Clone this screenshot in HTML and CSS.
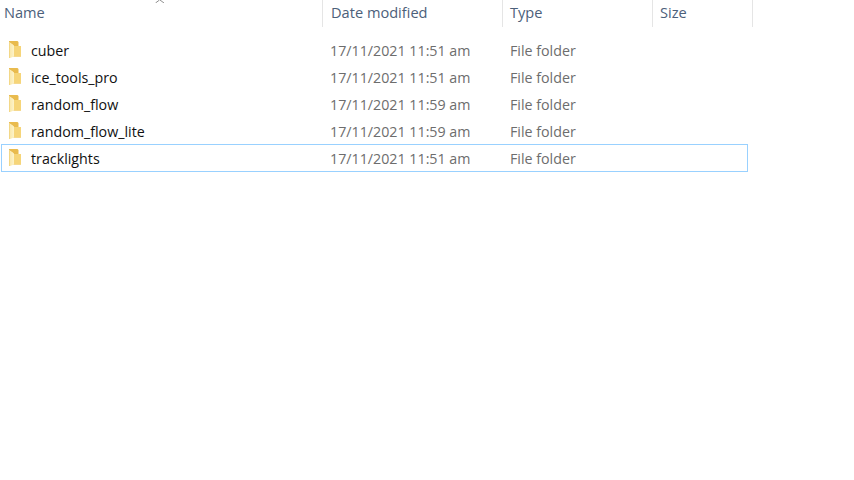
FILE: index.html
```html
<!DOCTYPE html>
<html lang="en">
<head>
<meta charset="utf-8">
<title>Folder list</title>
<link rel="stylesheet" href="styles.css">
</head>
<body>
<svg class="defs" width="0" height="0" aria-hidden="true">
  <defs>
    <linearGradient id="door" x1="0" y1="0" x2="1" y2="0">
      <stop offset="0" stop-color="#f9e6a6"/>
      <stop offset="1" stop-color="#fdf3c9"/>
    </linearGradient>
    <symbol id="folder" viewBox="0 0 12 17">
      <path d="M0 0H8.5L9.5 1V5H12V15.5H4V4L0 1Z" fill="#e9bb4e"/>
      <path d="M5 5H12V15.5H5Z" fill="#f6d579"/>
      <path d="M0 1L5 4.5V15.5L1 17H0Z" fill="url(#door)"/>
      <path d="M0 1V17" stroke="#ecc766" stroke-width="1"/>
    </symbol>
  </defs>
</svg>
<svg class="sort" width="10" height="3" viewBox="0 0 10 3"><path d="M0.5 3L4.5 0M5 0L9 3" stroke="#8f8f8f" fill="none"/></svg>
<div class="header">
  <div class="hcell name">Name</div>
  <div class="hcell date">Date modified</div>
  <div class="hcell type">Type</div>
  <div class="hcell size">Size</div>
</div>
<div class="list">
  <div class="row"><svg class="icon"><use href="#folder"/></svg><span class="fname">cuber</span><span class="fdate">17/11/2021 11:51 am</span><span class="ftype">File folder</span></div>
  <div class="row"><svg class="icon"><use href="#folder"/></svg><span class="fname">ice_tools_pro</span><span class="fdate">17/11/2021 11:51 am</span><span class="ftype">File folder</span></div>
  <div class="row"><svg class="icon"><use href="#folder"/></svg><span class="fname">random_flow</span><span class="fdate">17/11/2021 11:59 am</span><span class="ftype">File folder</span></div>
  <div class="row"><svg class="icon"><use href="#folder"/></svg><span class="fname">random_flow_lite</span><span class="fdate">17/11/2021 11:59 am</span><span class="ftype">File folder</span></div>
  <div class="row selected"><svg class="icon"><use href="#folder"/></svg><span class="fname">tracklights</span><span class="fdate">17/11/2021 11:51 am</span><span class="ftype">File folder</span></div>
</div>
</body>
</html>
```
FILE: styles.css
```css
html, body {
  margin: 0;
  padding: 0;
  background: #fff;
}
body {
  position: relative;
  width: 854px;
  height: 480px;
  overflow: hidden;
  font-family: "Open Sans", "Noto Sans", "Liberation Sans", sans-serif;
  font-size: 14.25px;
}
.defs {
  position: absolute;
}
.sort {
  position: absolute;
  left: 155px;
  top: 0;
}
.header {
  display: grid;
  grid-template-columns: 322px 180px 150px 101px;
  width: 753px;
  height: 27px;
  font-size: 14.6px;
}
.hcell {
  color: #4c607a;
  line-height: 25px;
  padding-left: 7px;
  border-left: 1px solid #e5e5e5;
  box-sizing: border-box;
}
.hcell.name {
  border-left: 0;
  padding-left: 4px;
}
.hcell.date {
  padding-left: 8px;
}
.hcell.size {
  border-right: 1px solid #e5e5e5;
}
.list {
  padding-top: 10px;
}
.row {
  display: grid;
  grid-template-columns: 31px 300px 179px auto;
  align-items: center;
  height: 27px;
  width: 748px;
  box-sizing: border-box;
  color: #6d6d6d;
}
.icon {
  width: 12px;
  height: 17px;
  margin: -2px 0 0 9px;
}
.fname {
  color: #111;
}
.fdate {
  margin-left: -1px;
}
.selected {
  height: 28px;
  margin: -1px 0 0 1px;
  width: 747px;
  padding-top: 1px;
  border: 1px solid #99d1ff;
  grid-template-columns: 29px 300px 179px auto;
}
.selected .icon {
  margin-left: 7px;
}
```
